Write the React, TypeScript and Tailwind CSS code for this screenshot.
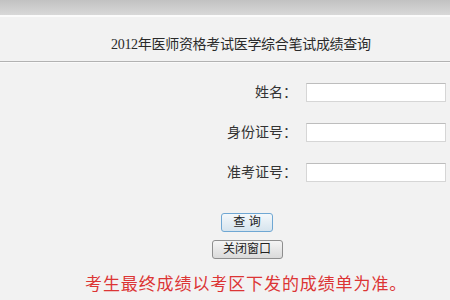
import React from "react";

const cjk = { fontFamily: '"Liberation Sans", "Noto Sans CJK SC", sans-serif' };
const titleFont = { fontFamily: '"Liberation Serif", "Noto Sans CJK SC", serif' };

const Row = ({ label }: { label: string }) => (
  <>
    <div className="flex items-center justify-end text-[14px] leading-[19px] text-[#333]">
      {label}
    </div>
    <input
      type="text"
      className="h-[19px] w-[140px] border border-[#d6d6d6] border-t-[#bdbdbd] bg-white outline-none"
    />
  </>
);

const App = () => {
  return (
    <div className="flex h-[300px] w-[450px] flex-col overflow-hidden bg-[#f2f2f2]" style={cjk}>
      <div className="h-[15px] bg-gradient-to-b from-[#c2c2c2] to-[#d8d8d8]" />
      <div className="h-[2px] bg-[#fbfbfb]" />
      <div className="flex h-[44px] items-end pb-[8px] pl-[111px]">
        <div className="text-[14px] leading-[16px] tracking-[-0.3px] text-[#2a2a2a]" style={titleFont}>
          2012年医师资格考试医学综合笔试成绩查询
        </div>
      </div>
      <div className="h-px bg-[#b2b2b2]" />
      <div className="h-px bg-[#fafafa]" />

      <div className="mt-[20px] grid grid-cols-[297px_140px] gap-x-[9px] gap-y-[21px]">
        <Row label="姓名：" />
        <Row label="身份证号：" />
        <Row label="准考证号：" />
      </div>

      <div className="mt-[31px] flex flex-col items-center gap-[8px] pl-[44px]">
        <button className="h-[19px] w-[52px] rounded-[3px] border border-[#6fa7d3] bg-gradient-to-b from-[#f4f8fb] to-[#d6e4ee] text-[12px] leading-[17px] text-[#222]">
          查 询
        </button>
        <button className="h-[19px] w-[71px] rounded-[3px] border border-[#8e8e8e] bg-gradient-to-b from-[#f5f5f5] to-[#dadada] text-[12px] leading-[17px] text-[#222]">
          关闭窗口
        </button>
      </div>

      <div className="mt-[16px] pl-[85px] text-[17px] leading-[20px] tracking-[0.9px] text-[#dc3535]">
        考生最终成绩以考区下发的成绩单为准。
      </div>
    </div>
  );
};

export default App;
